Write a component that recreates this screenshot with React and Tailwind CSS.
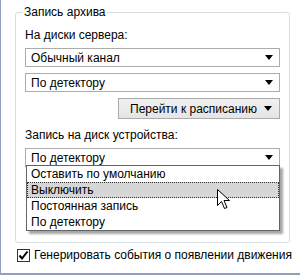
import React from "react";

const FONT = { fontFamily: '"Liberation Sans", Arial, sans-serif' };

function Arrow() {
  return (
    <svg width="8" height="5" viewBox="0 0 8 5" className="shrink-0">
      <path d="M0 0H8L4 5Z" fill="#000" />
    </svg>
  );
}

function Combo({ value }) {
  return (
    <div className="flex h-[19px] w-[255px] items-center justify-between border border-[#acacac] bg-white pl-[5px] pr-[6px]">
      <span className="leading-none">{value}</span>
      <Arrow />
    </div>
  );
}

function Cursor() {
  return (
    <svg width="13" height="20" viewBox="0 0 13 20" className="absolute left-[216px] top-[189px]">
      <path
        d="M0.5 0.5V16.5L4.5 12.5L7.5 19.5L10 18.5L7 11.5H12.5Z"
        fill="#fff"
        stroke="#000"
        strokeWidth="1"
        strokeLinejoin="round"
      />
    </svg>
  );
}

export default function App() {
  const items = ["Оставить по умолчанию", "Выключить", "Постоянная запись", "По детектору"];
  return (
    <div
      className="relative h-[275px] w-[300px] overflow-hidden border-b-2 border-l border-[#8f9fbd] bg-white text-[12px] text-black"
      style={FONT}
    >
      <div className="relative ml-[14px] mt-[12px] h-[231px] w-[275px] rounded-[3px] border border-[#d5dfe5]">
        <span className="absolute -top-[9px] left-[7px] bg-white px-[1px] leading-[16px]">Запись архива</span>

        <div className="flex flex-col pl-[9px] pt-[14px]">
          <div className="leading-[16px]">На диски сервера:</div>
          <div className="mt-[5px]"><Combo value="Обычный канал" /></div>
          <div className="mt-[6px]"><Combo value="По детектору" /></div>
          <div className="mt-[6px] flex w-[255px] justify-end">
            <div className="flex h-[21px] w-[162px] items-center justify-between border border-[#acacac] bg-gradient-to-b from-[#f0f0f0] to-[#e5e5e5] pl-[11px] pr-[7px]">
              <span className="whitespace-nowrap leading-none">Перейти к расписанию</span>
              <Arrow />
            </div>
          </div>
          <div className="mt-[8px] leading-[16px]">Запись на диск устройства:</div>
          <div className="mt-[5px]"><Combo value="По детектору" /></div>
        </div>
      </div>

      <div className="mt-[4px] flex items-center pl-[16px]">
        <div className="flex h-[13px] w-[13px] items-center justify-center border border-[#333] bg-white">
          <svg width="11" height="11" viewBox="0 0 11 11">
            <path d="M1.5 5.5L4 8.5L9.5 1.5" fill="none" stroke="#000" strokeWidth="2" />
          </svg>
        </div>
        <span className="ml-[4px] whitespace-nowrap leading-[16px]">Генерировать события о появлении движения</span>
      </div>

      <div className="absolute left-[25px] top-[165px] w-[254px] border border-[#646464] bg-white shadow-[3px_3px_2px_rgba(0,0,0,0.35)]">
        {items.map((it, i) => (
          <div
            key={it}
            className={
              i === 1
                ? "h-[16px] border border-dotted border-[#333] bg-[#d6d6d6] pl-[3px] leading-[14px]"
                : "h-[16px] border border-transparent pl-[3px] leading-[14px]"
            }
          >
            {it}
          </div>
        ))}
      </div>

      <Cursor />
    </div>
  );
}
